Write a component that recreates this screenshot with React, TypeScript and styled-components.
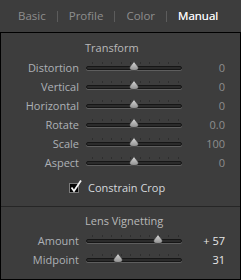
import React from "react";
import styled, { createGlobalStyle } from "styled-components";

const GlobalStyle = createGlobalStyle`
  html, body { margin: 0; padding: 0; background: #3d3d3d; }
  body { font-family: "Open Sans", "Noto Sans", sans-serif; }
`;

const Root = styled.div`
  width: 241px;
  height: 280px;
  display: flex;
  flex-direction: column;
  background: #3d3d3d;
  box-sizing: border-box;
`;

const TabBar = styled.div`
  height: 32px;
  flex: none;
  display: flex;
  align-items: center;
  padding-left: 18px;
  gap: 11px;
`;

const Tab = styled.span<{ $active?: boolean }>`
  font-size: 11.5px;
  line-height: 16px;
  color: ${(p) => (p.$active ? "#f2f2f2" : "#8e8e8e")};
  font-weight: 400;
  ${(p) => (p.$active ? "text-shadow: 0 0 0.4px #ffffff;" : "")}
`;

const TabDivider = styled.span`
  width: 1px;
  height: 11px;
  background: #5c5c5c;
`;

const Panel = styled.div`
  flex: 1;
  border: 1px solid #000;
  display: flex;
  flex-direction: column;
  background: #3d3d3d;
`;

const Heading = styled.div<{ $top: number }>`
  padding-left: 84px;
  padding-top: ${(p) => p.$top}px;
  margin-bottom: 2px;
  font-size: 11px;
  line-height: 16px;
  color: #b9b9b9;
`;

const Row = styled.div`
  display: grid;
  grid-template-columns: 85px 96px 43px;
  height: 19px;
  align-items: center;
`;

const Label = styled.span`
  text-align: right;
  padding-right: 7px;
  font-size: 11px;
  line-height: 19px;
  color: #adb1b6;
  white-space: nowrap;
`;

const Value = styled.span<{ $bright?: boolean }>`
  text-align: right;
  font-size: 11px;
  line-height: 19px;
  color: ${(p) => (p.$bright ? "#e8e8e8" : "#8e8e8e")};
  white-space: pre;
`;

const SliderBox = styled.div`
  position: relative;
  height: 19px;
  padding-top: 4px;
  box-sizing: border-box;
`;

const TickRow = styled.div`
  height: 2px;
  display: flex;
  justify-content: space-between;
  padding: 0 3px 0 6px;
  margin-bottom: 2px;
`;

const Tick = styled.span`
  width: 1px;
  height: 2px;
  background: #2e2e2e;
`;

const Track = styled.div`
  height: 4px;
  box-sizing: border-box;
  border-radius: 3px;
  background: #2b2b2b;
  border: 1px solid #161616;
  box-shadow: 0 1px 0 #5e5e5e;
`;

const Thumb = styled.svg`
  position: absolute;
  top: 3px;
  width: 10px;
  height: 10px;
`;

const CheckRow = styled.label`
  display: flex;
  align-items: center;
  height: 20px;
  margin-top: 6px;
  padding-left: 68px;
  gap: 9px;
`;

const CheckBox = styled.span`
  position: relative;
  width: 10px;
  height: 10px;
  box-sizing: border-box;
  background: #050505;
  border: 1px solid #7a7a7a;
`;

const CheckMark = styled.svg`
  position: absolute;
  left: 0px;
  top: -4px;
  width: 12px;
  height: 12px;
  overflow: visible;
`;

const CheckText = styled.span`
  font-size: 11px;
  line-height: 20px;
  color: #d4d8dc;
`;

const Separator = styled.div`
  height: 1px;
  margin-top: 8px;
  background: #262626;
`;

const TICKS = Array.from({ length: 10 });

function Slider({ f }: { f: number }) {
  const center = 6 + f * 84;
  return (
    <SliderBox>
      <TickRow>
        {TICKS.map((_, i) => (
          <Tick key={i} />
        ))}
      </TickRow>
      <Track />
      <Thumb viewBox="0 0 10 10" style={{ left: center - 5 }}>
        <defs>
          <linearGradient id="thumbGrad" x1="0" y1="0" x2="0" y2="1">
            <stop offset="0" stopColor="#d8d8d8" />
            <stop offset="1" stopColor="#8e8e8e" />
          </linearGradient>
        </defs>
        <path
          d="M5 0.6 L9.2 6 Q10 9.5 5 9.5 Q0 9.5 0.8 6 Z"
          fill="url(#thumbGrad)"
          stroke="#2a2a2a"
          strokeWidth="0.6"
        />
      </Thumb>
    </SliderBox>
  );
}

type RowData = { label: string; value: string; f: number; bright?: boolean };

const transform: RowData[] = [
  { label: "Distortion", value: "0", f: 0.5 },
  { label: "Vertical", value: "0", f: 0.5 },
  { label: "Horizontal", value: "0", f: 0.5 },
  { label: "Rotate", value: "0.0", f: 0.5 },
  { label: "Scale", value: "100", f: 0.5 },
  { label: "Aspect", value: "0", f: 0.5 },
];

const vignetting: RowData[] = [
  { label: "Amount", value: "+ 57", f: 0.785, bright: true },
  { label: "Midpoint", value: "31", f: 0.31, bright: true },
];

function SliderRow({ r }: { r: RowData }) {
  return (
    <Row>
      <Label>{r.label}</Label>
      <Slider f={r.f} />
      <Value $bright={r.bright}>{r.value}</Value>
    </Row>
  );
}

export default function App() {
  return (
    <>
      <GlobalStyle />
      <Root>
        <TabBar>
          <Tab>Basic</Tab>
          <TabDivider />
          <Tab>Profile</Tab>
          <TabDivider />
          <Tab>Color</Tab>
          <TabDivider />
          <Tab $active>Manual</Tab>
        </TabBar>
        <Panel>
          <Heading $top={7}>Transform</Heading>
          {transform.map((r) => (
            <SliderRow key={r.label} r={r} />
          ))}
          <CheckRow>
            <CheckBox>
              <CheckMark viewBox="0 0 12 12">
                <path
                  d="M1.5 7.5 L4 11 L11 0.5"
                  fill="none"
                  stroke="#f4f4f4"
                  strokeWidth="1.8"
                  strokeLinejoin="miter"
                />
              </CheckMark>
            </CheckBox>
            <CheckText>Constrain Crop</CheckText>
          </CheckRow>
          <Separator />
          <Heading $top={6}>Lens Vignetting</Heading>
          {vignetting.map((r) => (
            <SliderRow key={r.label} r={r} />
          ))}
        </Panel>
      </Root>
    </>
  );
}
